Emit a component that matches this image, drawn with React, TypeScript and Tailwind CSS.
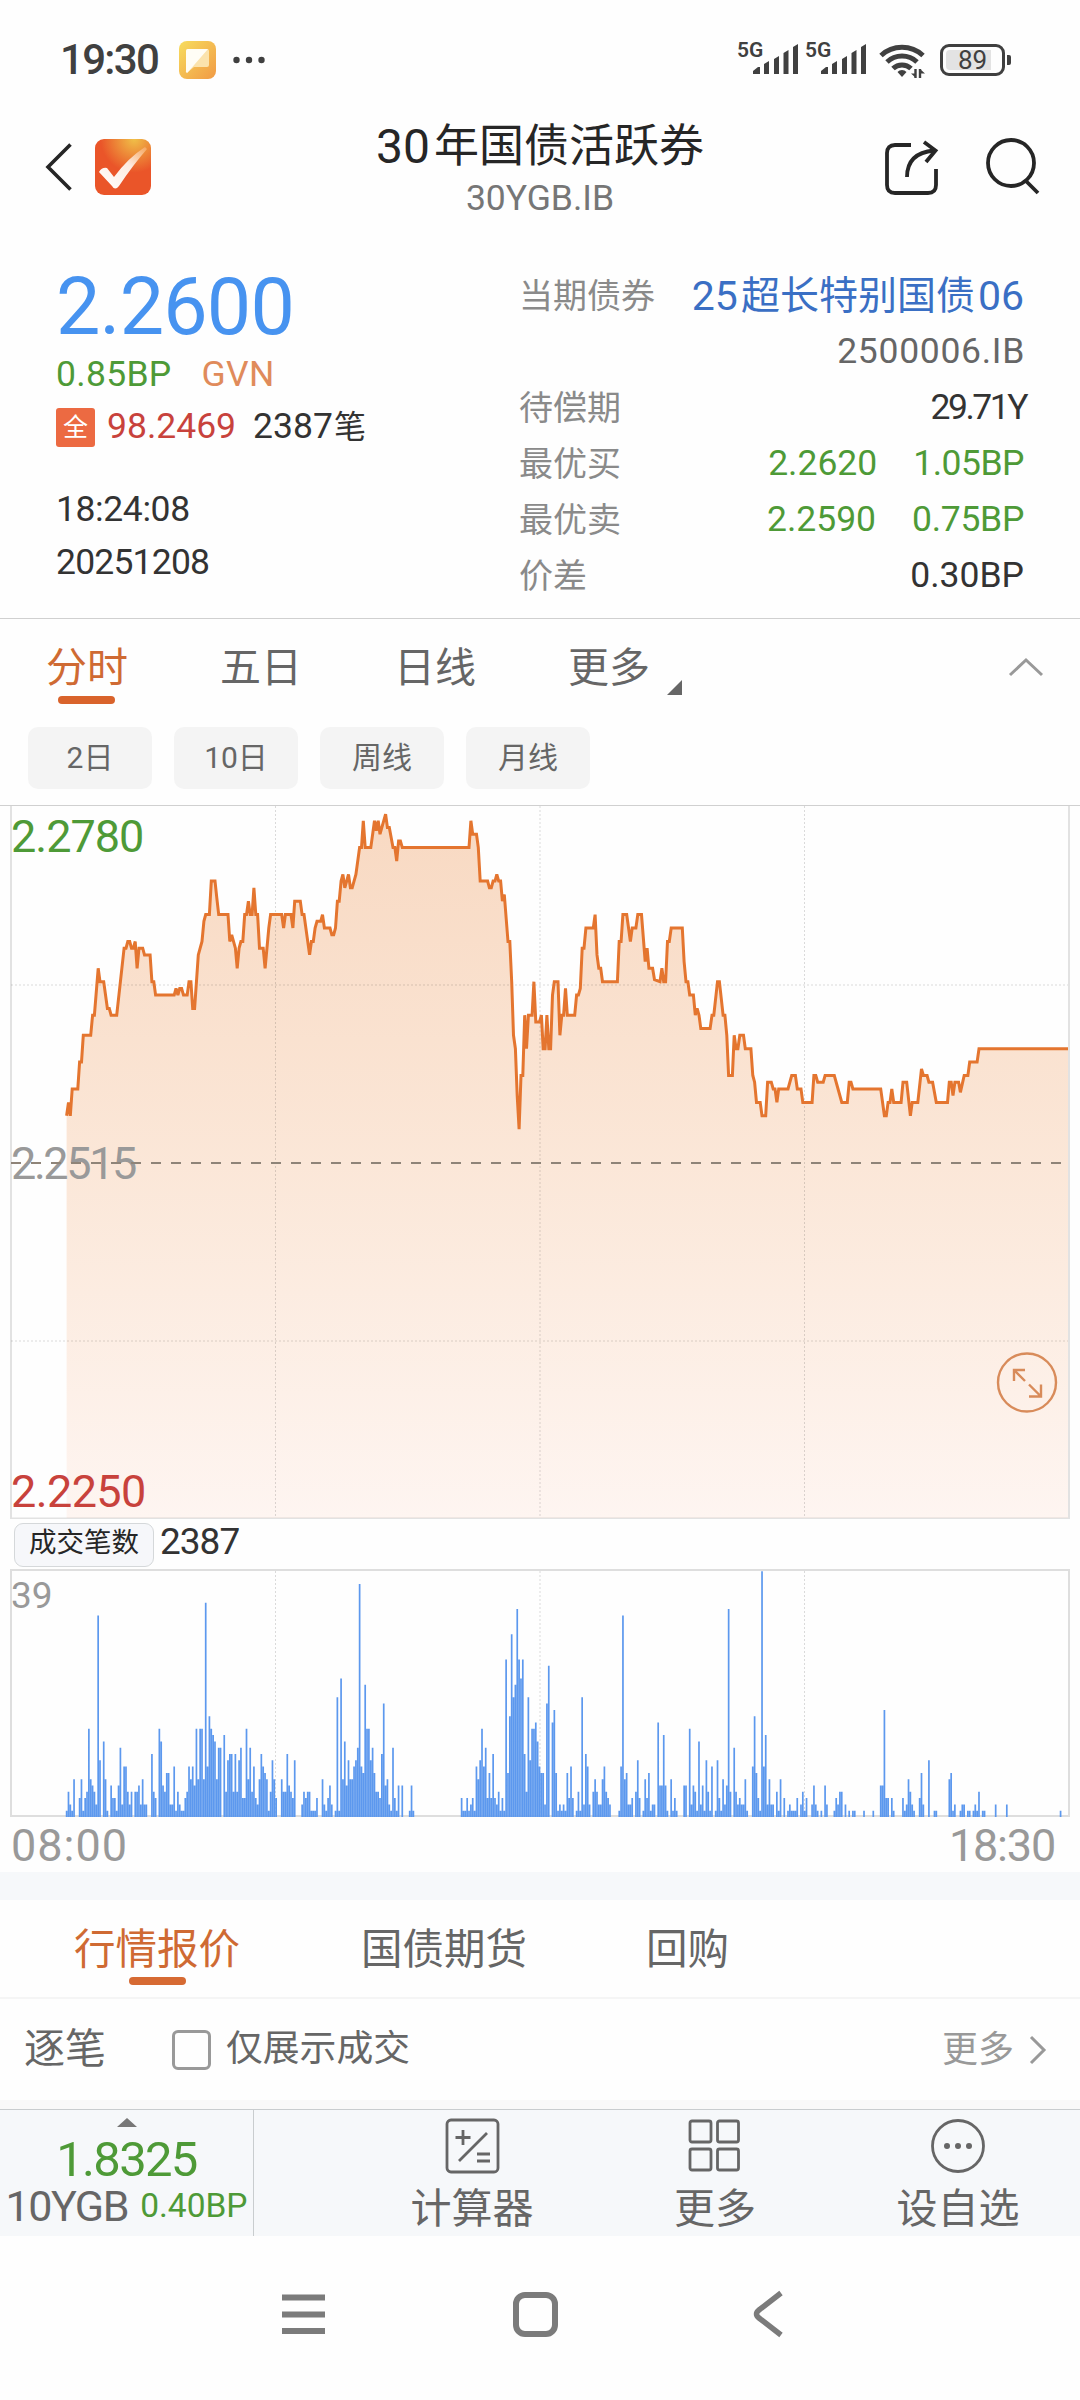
/**
 * Bond quote screen: intraday yield curve, trade count bars and quick actions
 */

import type { ReactNode } from 'react';

// One slot per trading minute, 08:00 to 18:30 without the lunch hour
const MINUTES = 570;
const LEFT = 11;
const RIGHT = 1068;
const STEP = (RIGHT - LEFT) / MINUTES;

// [minute, ticks above 2.2250], one tick is 0.05BP
const PRICE_POINTS: [number, number][] = [
  [30, 60], [31, 62], [32, 60], [33, 64], [36, 64], [37, 68], [38, 68], [39, 72], [43, 72], [44, 75],
  [45, 75], [47, 82], [48, 80], [50, 80], [52, 76], [53, 76], [54, 75], [57, 75], [61, 85], [62, 85],
  [63, 86], [64, 86], [65, 85], [66, 85], [67, 86], [68, 82], [69, 85], [71, 85], [72, 84], [75, 84],
  [76, 80], [77, 80], [78, 78], [88, 78], [89, 79], [90, 78], [91, 79], [92, 79], [93, 78], [95, 78],
  [96, 80], [97, 80], [98, 76], [99, 76], [101, 84], [103, 86], [104, 89], [105, 90], [107, 90], [108, 95],
  [110, 95], [111, 92.5], [112, 90], [117, 90], [118, 86], [119, 87], [121, 85], [122, 82], [123, 85], [124, 86],
  [125, 86], [126, 90], [127, 90], [128, 92], [129, 90], [130, 90], [131, 94], [132, 90], [133, 90], [134, 85],
  [136, 85], [137, 82], [139, 88], [140, 90], [146, 90], [147, 88], [148, 90], [151, 90], [152, 88], [153, 92],
  [156, 92], [157, 90], [158, 90], [161, 84], [162, 86], [163, 86], [164, 88], [165, 89], [167, 89], [168, 90],
  [169, 88], [172, 88], [173, 87], [174, 87], [175, 88], [176, 92], [177, 92], [178, 95], [179, 96], [180, 94],
  [182, 96], [183, 94], [184, 94], [186, 96], [188, 100], [189, 100], [190, 104], [191, 100], [194, 100], [196, 104],
  [197, 102.5], [198, 104], [199, 102], [202, 105], [203, 103], [204, 103], [206, 100], [207, 100], [208, 98], [209, 101],
  [210, 101], [211, 100], [247, 100], [248, 104], [249, 102], [251, 102], [252, 100], [253, 95], [257, 95], [258, 94],
  [259, 94], [260, 95], [261, 95], [262, 96], [263, 95], [264, 95], [265, 92], [266, 93], [268, 86], [269, 86],
  [270, 80], [271, 72], [272, 70], [273, 63], [274, 58], [275, 66], [276, 66], [277, 75], [278, 70], [279, 75],
  [281, 75], [282, 80], [283, 74], [285, 74], [286, 75], [287, 70], [288, 70], [289, 75], [290, 70], [291, 70],
  [292, 78], [293, 80], [295, 80], [296, 72], [297, 75], [298, 75], [299, 79], [300, 75], [304, 75], [305, 78],
  [306, 78], [307, 79], [308, 85], [309, 85], [310, 88], [314, 88], [315, 90], [316, 84], [317, 82], [318, 82],
  [319, 80], [327, 80], [328, 86], [329, 86], [330, 90], [332, 90], [334, 86], [335, 88], [337, 88], [338, 90],
  [340, 90], [342, 83], [343, 85], [344, 82], [346, 82], [347, 80.3], [350, 80], [351, 82], [352, 80], [353, 80],
  [354, 86], [355, 86], [356, 88], [362, 88], [363, 83], [364, 80], [365, 80], [366, 78], [368, 78], [369, 75],
  [370, 76], [371, 75], [372, 73], [377, 73], [378, 75], [379, 75], [381, 80], [382, 80], [384, 75], [385, 75],
  [386, 72], [387, 66], [389, 66], [390, 72], [391, 70], [392, 70], [393, 72], [395, 72], [396, 70], [399, 70],
  [400, 66], [401, 65], [402, 62], [404, 62], [405, 60], [407, 60], [408, 65], [410, 65], [411, 64], [412, 64],
  [413, 62], [414, 64], [419, 64], [421, 66], [423, 66], [424, 64], [426, 64], [427, 62], [432, 62], [433, 66],
  [434, 66], [435, 65], [438, 65], [439, 66], [444, 66], [448, 62], [451, 62], [452, 65], [453, 65], [454, 64],
  [469, 64], [471, 60], [472, 60], [473, 62], [474, 62], [475, 64], [476, 62], [480, 62], [481, 65], [483, 65],
  [485, 60], [486, 62], [489, 62], [491, 67], [492, 66], [494, 66], [495, 65], [497, 65], [499, 62], [505, 62],
  [506, 65], [507, 65], [508, 63], [509, 65], [511, 65], [512, 63.5], [514, 66], [516, 66], [517, 68], [521, 68],
  [522, 70], [570, 70],
];

// Trade counts per minute, grouped as runs: [first minute, counts]
const VOLUME_RUNS: [number, number[]][] = [
  [30, [1, 4, 2, 1, 6, 0, 0, 3, 6, 1, 3, 4, 14, 6, 5, 4, 2, 32, 9, 0, 12, 6, 1, 0, 5, 3, 3, 1, 5, 11, 2, 8, 8, 4, 2, 4, 0, 4, 4, 5, 2, 6, 2, 2]],
  [76, [10, 4, 3, 0, 14, 12, 5, 4, 7, 7, 2, 2, 8, 1, 4, 2, 1, 1, 3, 4, 8, 6, 8, 5]],
  [100, [14, 6, 14, 14, 6, 34, 8, 16, 14, 13, 12, 6, 11, 11, 0, 13, 4, 9, 10, 10, 4, 10, 4, 9, 11, 3, 3, 14, 6, 11, 4, 8, 3, 2, 6, 10, 8, 7, 6, 1, 4, 9, 6, 3]],
  [146, [6, 4, 4, 10, 5, 4, 3, 9]],
  [157, [2, 4, 3, 4, 4, 1, 1, 1, 3]],
  [168, [6, 2, 1, 3, 5, 2, 0, 1, 19, 1, 22, 6, 12, 5, 9, 6, 6, 8, 9, 11, 37, 8, 7, 21, 14, 14, 9, 11, 7, 4, 4, 3, 10, 18, 5, 6, 2, 1, 11, 3, 1, 5, 0, 5]],
  [215, [1, 5, 1]],
  [243, [3, 1, 1, 3, 1, 2, 3, 1, 8, 6, 9, 14, 8, 11, 3, 7, 3, 10, 3, 2, 4, 1, 3, 1, 25, 7, 16, 29, 19, 21, 33, 25, 22, 25, 10, 4, 19, 9, 14, 14, 15, 12, 8, 7, 7, 2, 18, 24, 0, 15, 17, 7]],
  [295, [1, 2, 1, 2, 1, 7, 3, 8, 3, 0, 1, 4, 1, 19, 2, 10, 8, 2, 0, 4, 6, 4, 2, 2, 6, 8, 4, 3, 2]],
  [328, [1, 8, 32, 6, 7, 2, 2, 3, 0, 4, 9, 3, 0, 1, 6, 3, 7, 1, 2, 2, 0, 15, 5, 5, 13, 5, 1, 0, 6, 1, 3, 1]],
  [363, [5, 5, 0, 14, 2, 5, 4, 1, 12, 2, 5, 1, 9, 4, 1, 8, 0, 1, 9, 3, 1, 6, 2, 5, 33, 4, 0, 11, 4, 2, 3, 2, 2, 6, 1]],
  [400, [8, 16, 7, 3, 1, 39, 8, 13, 2, 6, 2, 2, 0, 4, 1, 6, 0, 3, 0, 1, 2, 1, 1, 1, 3, 0, 2, 4, 1, 3]],
  [432, [2, 5, 2, 1, 0, 1, 0, 5, 2]],
  [444, [1, 3, 2, 4, 4, 0, 2, 0, 1, 0, 1, 1]],
  [460, [1]],
  [465, [1]],
  [469, [5, 5, 17, 3, 3, 0, 3, 1]],
  [481, [3, 1, 2, 6, 4, 2, 1]],
  [490, [3, 7, 2, 0, 0, 9, 0, 0, 1, 1]],
  [506, [6, 7, 1, 2, 0, 0, 1, 2, 2, 0, 1, 1, 0, 1, 2, 1, 4, 0, 1, 1]],
  [531, [2]],
  [537, [2]],
  [566, [1]],
];

const xAt = (minute: number) => LEFT + minute * STEP;

const linePoints = PRICE_POINTS.map(([m, t]) => `${xAt(m).toFixed(1)},${(712 - t * 6.704).toFixed(1)}`).join(' ');
const areaPoints = `${xAt(30)},712 ${linePoints} ${RIGHT},712`;

const volumePath = VOLUME_RUNS.flatMap(([start, counts]) =>
  counts.map((count, i) => (count ? `M${xAt(start + i).toFixed(2)} 248v${(-count * 6.3).toFixed(1)}` : ''))
).join('');

const GRID_X = [275.5, 540, 804.5];

function SignalIcon() {
  return (
    <div className="relative h-[36px] w-[63px]">
      <span className="absolute -top-[2px] left-0 text-[21px] font-semibold leading-[20px]">5G</span>
      <svg className="absolute inset-0" width="63" height="36" fill="#404040">
        <path d="M16 32v-3l5-4h2v7zM27 32V22l5-3v13zM37 32V17l5-3v18zM46.500 32V11l5-3v24zM56 32V5l5-3v30z" />
      </svg>
    </div>
  );
}

function StatusBar() {
  return (
    <div className="flex h-[120px] items-center pl-[60px] pr-[69px] text-[#404040]">
      <span className="w-[119px] text-[42px] font-medium leading-none tracking-[-1.700px]">19:30</span>
      <svg width="38" height="40" viewBox="0 0 38 40">
        <defs>
          <linearGradient id="note" x1="0" y1="0" x2="1" y2="1">
            <stop offset="0" stopColor="#f7dd5e" />
            <stop offset="1" stopColor="#f19a45" />
          </linearGradient>
        </defs>
        <rect x="0" y="1" width="37" height="38" rx="8" fill="url(#note)" />
        <path d="M9 9h19a2 2 0 0 1 2 2v14a2 2 0 0 1-2 2H15l-6 5a1 1 0 0 1-2-1V11a2 2 0 0 1 2-2z" fill="#fbe3ad" />
        <path d="M9 9h20L9 32a1 1 0 0 1-2-1V11a2 2 0 0 1 2-2z" fill="#fffdf6" />
      </svg>
      <svg className="ml-[16px]" width="32" height="8" fill="#404040">
        <circle cx="3.500" cy="4" r="3.200" />
        <circle cx="16" cy="4" r="3.200" />
        <circle cx="28.500" cy="4" r="3.200" />
      </svg>
      <div className="ml-auto flex items-center">
        <SignalIcon />
        <div className="ml-[5px]">
          <SignalIcon />
        </div>
        <svg className="ml-[11px]" width="48" height="36" viewBox="0 0 48 36" fill="none" stroke="#404040">
          <path d="M2 13.500a31 31 0 0 1 42 0" strokeWidth="5" />
          <path d="M8 20a22 22 0 0 1 30 0" strokeWidth="5" />
          <path d="M14 26.500a13 13 0 0 1 18 0" strokeWidth="5" />
          <path d="M23 35l-4.500-5a6 6 0 0 1 9 0z" fill="#404040" stroke="none" />
          <path d="M36.500 27v9M41 36v-9" strokeWidth="2.400" />
          <path d="M37 36l-5-4.500h5zM41 27l5 4.500h-5z" fill="#404040" stroke="none" />
        </svg>
        <div className="ml-[13px] flex items-center">
          <div className="flex h-[32px] w-[65px] rounded-[9px] border-[3px] border-[#404040] p-[3px]">
            <div className="relative h-full w-full">
              <div className="h-full w-[45px] rounded-l-[4px] bg-[#e3e3e3]" />
              <span className="absolute inset-0 text-center text-[26px] leading-[21px]">89</span>
            </div>
          </div>
          <div className="ml-[2px] h-[10px] w-[4px] rounded-r-[2px] bg-[#404040]" />
        </div>
      </div>
    </div>
  );
}

function Header() {
  return (
    <div className="flex h-[120px] pl-[45px] pr-[40px]">
      <div className="flex w-[315px] pt-[18px]">
        <svg className="mt-[4px]" width="28" height="50" fill="none" stroke="#262626" strokeWidth="3.600">
          <path d="M25.500 2.500L3 25l22.500 22.500" />
        </svg>
        <svg className="ml-[22px]" width="58" height="60" viewBox="0 0 58 60">
          <defs>
            <radialGradient id="logo" cx="0.700" cy="0" r="0.600">
              <stop offset="0" stopColor="#f0c048" />
              <stop offset="1" stopColor="#ea5529" />
            </radialGradient>
            <linearGradient id="check" x1="0" y1="1" x2="1" y2="0">
              <stop offset="0" stopColor="#ffffff" />
              <stop offset="0.600" stopColor="#fdeae0" />
              <stop offset="1" stopColor="#f5a55c" />
            </linearGradient>
          </defs>
          <rect x="0" y="1" width="56" height="56" rx="9" fill="url(#logo)" />
          <path d="M4 34q3-5 8-4l7 9Q33 20 50 9l2 2Q38 27 24 48q-4 5-7 0z" fill="url(#check)" />
        </svg>
      </div>
      <div className="flex flex-1 flex-col items-center text-center">
        <h1 className="mt-[2px] flex h-[49px] items-center gap-[4px] whitespace-nowrap text-[45px] leading-none text-[#262626]">
          <span className="text-[48px]">30</span>年国债活跃券
        </h1>
        <p className="h-[54px] text-[35.500px] leading-[54px] text-[#767676]">30YGB.IB</p>
      </div>
      <div className="flex w-[320px] justify-end pt-[18px]">
        <svg width="56" height="58" fill="none" stroke="#262626" strokeWidth="3.800">
          <path d="M27 7H11q-8 0-8 8v32q0 8 8 8h33q8 0 8-8V31" />
          <path d="M23 39q0-24 27-26.500" />
          <path d="M40 4l11.500 8.500L42 24" />
        </svg>
        <svg className="ml-[46px]" width="54" height="58" fill="none" stroke="#262626" strokeWidth="3.800">
          <circle cx="25" cy="25" r="23" />
          <path d="M39 42l13 13" />
        </svg>
      </div>
    </div>
  );
}

function DetailRow({ label, children }: { label: string; children: ReactNode }) {
  return (
    <div className="flex h-[56px] items-center justify-between">
      <span className="text-[34px] text-[#8a8a8a]">{label}</span>
      {children}
    </div>
  );
}

function QuotePanel() {
  return (
    <div className="flex h-[379px] justify-between border-b border-[#d0d0d0] pl-[56px] pr-[56px] pt-[22px] text-[35.500px] leading-none text-[#333333]">
      <div>
        <div className="flex h-[90px] items-center text-[79px] tracking-[-0.800px] text-[#4793f0]">2.2600</div>
        <div className="flex h-[45px] items-center gap-[30px] tracking-[0.300px]">
          <span className="text-[#4e9a37]">0.85BP</span>
          <span className="text-[#e08b5b]">GVN</span>
        </div>
        <div className="flex h-[60px] items-center">
          <span className="flex h-[39px] w-[39px] items-center justify-center rounded-[3px] bg-[#ec6a42] text-[25px] text-white">
            全
          </span>
          <span className="ml-[12px] text-[#c8423c]">98.2469</span>
          <span className="ml-[17px]">2387</span>
          <span className="ml-px text-[32px]">笔</span>
        </div>
        <div className="mt-[26px] flex h-[53px] items-center tracking-[-0.400px]">18:24:08</div>
        <div className="flex h-[53px] items-center tracking-[-0.800px]">20251208</div>
      </div>
      <div className="w-[505px] pt-[6px]">
        <DetailRow label="当期债券">
          <span className="flex items-center gap-[3px] text-[39px] text-[#3a6fc4]">
            <span className="text-[41px]">25</span>超长特别国债<span className="text-[41px]">06</span>
          </span>
        </DetailRow>
        <DetailRow label="">
          <span className="-mr-px tracking-[0.700px] text-[#666666]">2500006.IB</span>
        </DetailRow>
        <DetailRow label="待偿期">
          <span className="-mr-[2px] tracking-[-2.500px]">29.71Y</span>
        </DetailRow>
        <DetailRow label="最优买">
          <span className="flex gap-[36px] text-[#4e9a37]">
            <span>2.2620</span>
            <span className="tracking-[-0.500px]">1.05BP</span>
          </span>
        </DetailRow>
        <DetailRow label="最优卖">
          <span className="flex gap-[36px] text-[#4e9a37]">
            <span>2.2590</span>
            <span className="tracking-[-0.300px]">0.75BP</span>
          </span>
        </DetailRow>
        <DetailRow label="价差">
          <span>0.30BP</span>
        </DetailRow>
      </div>
    </div>
  );
}

function PeriodTabs() {
  return (
    <div className="h-[187px] border-b border-[#d0d0d0]">
      <div className="flex h-[108px] items-start pl-[46px] pr-[36px] pt-[23px] text-[41px] leading-[52px] text-[#666666]">
        <div className="flex w-[174px] flex-col items-start text-[#cf6a33]">
          分时
          <span className="ml-[12px] mt-[2px] h-[8px] w-[57px] rounded-full bg-[#d9632b]" />
        </div>
        <div className="w-[174px]">五日</div>
        <div className="w-[174px]">日线</div>
        <div className="flex items-end">
          更多
          <svg className="-mb-[1px] ml-[17px]" width="15" height="15" fill="#666666">
            <path d="M15 0v15H0z" />
          </svg>
        </div>
        <svg className="ml-auto mt-[15px]" width="36" height="20" fill="none" stroke="#999999" strokeWidth="3">
          <path d="M2 18L18 3l16 15" />
        </svg>
      </div>
      <div className="flex gap-[22px] pl-[28px]">
        {['2日', '10日', '周线', '月线'].map((label) => (
          <div
            key={label}
            className="flex h-[62px] w-[124px] items-center justify-center rounded-[10px] bg-[#f4f4f4] text-[30px] leading-none text-[#666666]"
          >
            {label}
          </div>
        ))}
      </div>
    </div>
  );
}

function PriceChart() {
  return (
    <svg className="block" width="1080" height="713" viewBox="0 0 1080 713">
      <defs>
        <linearGradient id="area" x1="0" y1="0" x2="0" y2="1">
          <stop offset="0" stopColor="#f8d9c2" />
          <stop offset="0.500" stopColor="#fbe7d8" />
          <stop offset="1" stopColor="#fef5f1" />
        </linearGradient>
      </defs>
      <polygon points={areaPoints} fill="url(#area)" />
      <g stroke="#000000" strokeOpacity="0.140" strokeDasharray="2 2">
        {GRID_X.map((x) => (
          <path key={x} d={`M${x} 0v712`} />
        ))}
        <path d="M11 179h1057M11 535h1057" />
      </g>
      <path d="M11 0v712M1069 0v712M10 712.500h1060" fill="none" stroke="#000000" strokeOpacity="0.110" strokeWidth="2" />
      <polyline points={linePoints} fill="none" stroke="#e4752f" strokeWidth="3" strokeMiterlimit="3" />
      <g fontSize="45">
        <text x="11" y="46" fill="#4e9a37" letterSpacing="-1">2.2780</text>
        <text x="11" y="373" fill="#999999" letterSpacing="-2.400">2.2515</text>
        <text x="11" y="701" fill="#c8423c" letterSpacing="-0.600">2.2250</text>
      </g>
      <path d="M11 357h1057" stroke="#8f8478" strokeWidth="2" strokeDasharray="10 10" />
      <g fill="none" stroke="#d88b5a" strokeWidth="2.400">
        <circle cx="1027" cy="576.500" r="29" />
        <path d="M1014 575v-11h11M1014 564l11 11M1029 590.500h12v-12M1041 590.500l-12-12" />
      </g>
    </svg>
  );
}

function VolumeChart() {
  return (
    <>
      <div className="flex h-[50px] items-center pl-[14px] text-[#333333]">
        <span className="mt-[1px] flex h-[44px] w-[140px] items-center justify-center rounded-[9px] border border-[#d5d8da] bg-[#f6f7fa] pb-[4px] text-[27.500px] leading-none text-[#262626]">
          成交笔数
        </span>
        <span className="ml-[6px] mt-[-6px] text-[37px] leading-none tracking-[-1px]">2387</span>
      </div>
      <svg className="block" width="1080" height="303" viewBox="0 0 1080 303">
        <g stroke="#000000" strokeOpacity="0.140" strokeDasharray="2 2">
          {GRID_X.map((x) => (
            <path key={x} d={`M${x} 2v244`} />
          ))}
        </g>
        <rect x="11" y="1" width="1058" height="246" fill="none" stroke="#dedede" strokeWidth="2" />
        <path d={volumePath} stroke="#5c98ee" strokeWidth="1.700" />
        <g fill="#999999">
          <text x="11" y="39" fontSize="37">39</text>
          <text x="11" y="292" fontSize="45" letterSpacing="1">08:00</text>
          <text x="1055" y="292" fontSize="45" letterSpacing="-1.200" textAnchor="end">18:30</text>
        </g>
      </svg>
    </>
  );
}

function QuoteTabs() {
  return (
    <div className="flex h-[99px] items-start border-b-2 border-[#f5f5f5] pl-[74px] pt-[24px] text-[41.500px] leading-[52px] text-[#666666]">
      <div className="flex w-[287px] flex-col items-start text-[#cf6a33]">
        行情报价
        <span className="ml-[55px] mt-[1px] h-[8px] w-[57px] rounded-full bg-[#d66a33]" />
      </div>
      <div className="w-[285px]">国债期货</div>
      <div>回购</div>
    </div>
  );
}

function TradesRow() {
  return (
    <div className="flex h-[101px] items-center pl-[24px] pr-[32px] text-[36.800px] leading-none text-[#666666]">
      <span className="text-[41px]">逐笔</span>
      <span className="ml-[66px] h-[40px] w-[39px] rounded-[6px] border-[3px] border-[#999999]" />
      <span className="ml-[15px]">仅展示成交</span>
      <span className="ml-auto text-[36px] text-[#999999]">更多</span>
      <svg className="ml-[14px]" width="20" height="30" fill="none" stroke="#999999" strokeWidth="3">
        <path d="M3 2l13 13L3 28" />
      </svg>
    </div>
  );
}

function Action({ label, className, children }: { label: string; className: string; children: ReactNode }) {
  return (
    <div className={`flex flex-col items-center pt-[8px] ${className}`}>
      <svg width="56" height="56" viewBox="0 0 56 56" fill="none" stroke="#666666" strokeWidth="2.800">
        {children}
      </svg>
      <span className="mt-[9px] text-[41px] leading-[52px]">{label}</span>
    </div>
  );
}

function BottomBar() {
  return (
    <div className="border-t-[9px] border-[#f9f9f9]">
      <div className="flex h-[127px] border-t border-[#c9cdcf] bg-[#f6f8fa] text-[#666666]">
        <div className="flex w-[254px] flex-col items-center border-r border-[#c9cdcf]">
          <svg className="mt-[8px] block" width="20" height="9" fill="#777777">
            <path d="M10 0l10 9H0z" />
          </svg>
          <span className="mt-[7px] text-[49px] leading-[52px] tracking-[-1.700px] text-[#4e9a37]">1.8325</span>
          <div className="flex h-[40px] items-center gap-[12px] whitespace-nowrap leading-none">
            <span className="text-[43px] tracking-[-1.400px]">10YGB</span>
            <span className="text-[33.500px] text-[#4e9a37]">0.40BP</span>
          </div>
        </div>
        <Action label="计算器" className="ml-[153px] w-[130px]">
          <rect x="3" y="2" width="51" height="52" rx="4" />
          <path d="M19 12v15M11.500 19.500h15M43 15L15 43M33 36h13M33 43h13" />
        </Action>
        <Action label="更多" className="ml-[113px] w-[130px]">
          <rect x="3" y="3" width="21" height="21" rx="2" />
          <rect x="30.500" y="3" width="21" height="21" rx="2" />
          <rect x="3" y="31" width="21" height="21" rx="2" />
          <rect x="30.500" y="31" width="21" height="21" rx="2" />
        </Action>
        <Action label="设自选" className="ml-[113px] w-[130px]">
          <circle cx="28" cy="28" r="25.500" />
          <g fill="#666666" stroke="none">
            <circle cx="17" cy="28" r="3" />
            <circle cx="28" cy="28" r="3" />
            <circle cx="39" cy="28" r="3" />
          </g>
        </Action>
      </div>
    </div>
  );
}

function NavBar() {
  return (
    <div className="flex h-[164px] items-start pl-[280px] pt-[53px]">
      <svg width="48" height="50" stroke="#7b7b7b" strokeWidth="6">
        <path d="M2 8.500h43M2 25.500h43M2 42h43" />
      </svg>
      <svg className="ml-[184px]" width="48" height="50" fill="none" stroke="#7b7b7b" strokeWidth="6">
        <rect x="4" y="6" width="39" height="39" rx="9" />
      </svg>
      <svg className="ml-[191px]" width="34" height="50" fill="none" stroke="#7b7b7b" strokeWidth="5.500">
        <path d="M30 4L8 21q-5 4 0 8l22 17" />
      </svg>
    </div>
  );
}

export default function App() {
  return (
    <div className="h-[2400px] w-[1080px] overflow-hidden bg-[#fefefe] font-[Roboto,'Noto_Sans_CJK_SC',sans-serif]">
      <StatusBar />
      <Header />
      <QuotePanel />
      <PeriodTabs />
      <PriceChart />
      <VolumeChart />
      <div className="h-[28px] bg-[#f6f8fa]" />
      <QuoteTabs />
      <TradesRow />
      <BottomBar />
      <NavBar />
    </div>
  );
}
